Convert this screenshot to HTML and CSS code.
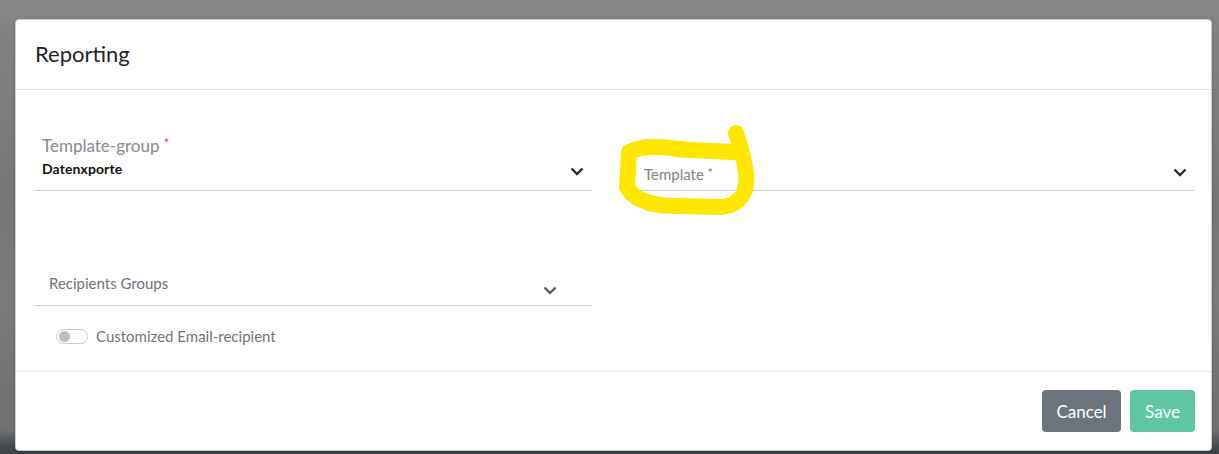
FILE: index.html
```html
<!DOCTYPE html>
<html>
<head>
<meta charset="utf-8">
<link rel="stylesheet" href="styles.css">
</head>
<body>
<div class="backdrop">
  <div class="modal">
    <div class="modal-header">
      <h1 class="modal-title">Reporting</h1>
    </div>
    <div class="modal-body">
      <div class="row row-top">
        <div class="field field-filled">
          <div class="field-text">
            <div class="float-label">Template-group <span class="req">*</span></div>
            <div class="value">Datenxporte</div>
          </div>
          <svg class="chev" width="14" height="9" viewBox="0 0 14 9"><path d="M1.5 1.5 L7 7 L12.5 1.5" fill="none" stroke="#2b2b2b" stroke-width="2.4"/></svg>
        </div>
        <div class="field field-empty">
          <div class="placeholder">Template <span class="req">*</span></div>
          <svg class="chev" width="14" height="9" viewBox="0 0 14 9"><path d="M1.5 1.5 L7 7 L12.5 1.5" fill="none" stroke="#2b2b2b" stroke-width="2.4"/></svg>
          <svg class="scribble" width="150" height="100" viewBox="615 120 150 100">
            <path d="M734 147 L690 145 C668 144 652 137 629 147 L627 182 C633 194 650 201 676 201 L722 202 C741 200 748 186 746 168 C744 154 740 140 736 128" fill="none" stroke="#ffe600" stroke-width="16" stroke-linejoin="round" stroke-linecap="round"/>
          </svg>
        </div>
      </div>
      <div class="row row-second">
        <div class="field field-recip">
          <div class="placeholder dark">Recipients Groups</div>
          <svg class="chev chev-gray" width="14" height="9" viewBox="0 0 14 9"><path d="M1.5 1.5 L7 7 L12.5 1.5" fill="none" stroke="#555" stroke-width="2.2"/></svg>
        </div>
      </div>
      <div class="toggle-row">
        <span class="toggle"><span class="knob"></span></span>
        <span class="toggle-label">Customized Email-recipient</span>
      </div>
    </div>
    <div class="modal-footer">
      <button class="btn btn-cancel">Cancel</button>
      <button class="btn btn-save">Save</button>
    </div>
  </div>
</div>
</body>
</html>
```

FILE: styles.css
```css
* { box-sizing: border-box; }
html, body { margin: 0; padding: 0; }
body {
  width: 1219px;
  height: 454px;
  overflow: hidden;
  font-family: "Lato", "Open Sans", sans-serif;
  background:
    linear-gradient(to bottom, transparent 0, transparent 430px, #454b4f 446px, #3c4246 454px),
    linear-gradient(to bottom, #898989 0, #808080 40px, #7e7e7e 100px, #767676 200px, #7b7b7b 300px, #6f7173 400px);
}
.backdrop { padding: 19px 7px 0 15px; }
.modal {
  height: 432px;
  background: #fff;
  border: 1px solid #cfcfcf;
  border-radius: 4px;
  display: flex;
  flex-direction: column;
  box-shadow: 0 1px 3px rgba(0,0,0,0.25);
}
.modal-header {
  height: 70px;
  border-bottom: 1px solid #dee2e6;
  display: flex;
  align-items: center;
  padding: 0 19px;
}
.modal-title {
  margin: 0;
  font-weight: 400;
  font-size: 22px;
  color: #212529;
  padding-bottom: 2px;
}
.modal-body {
  flex: 1;
  padding: 43px 17px 0 18px;
  display: flex;
  flex-direction: column;
}
.row { display: grid; grid-template-columns: 558px 1fr; column-gap: 39px; }
.field {
  position: relative;
  border-bottom: 1px solid #cfcfcf;
  display: flex;
  align-items: flex-end;
}
.field-filled { height: 58px; padding: 0 0 0 8px; align-items: flex-start; }
.field-text { flex: 1; }
.float-label { font-size: 17px; line-height: 20px; color: #848b92; }
.req { color: #e53935; font-size: 13px; vertical-align: 4px; }
.value { font-size: 14px; font-weight: 700; line-height: 20px; margin-top: 3px; color: #111; letter-spacing: 0.1px; }
.field-filled .chev { margin: 34px 8px 0 0; }
.field-empty { height: 58px; padding: 0 7px 7px 13px; align-items: flex-end; }
.placeholder { flex: 1; font-size: 15px; line-height: 18px; color: #7d848b; }
.placeholder .req { font-size: 12px; vertical-align: 3px; }
.field-empty .chev { margin-bottom: 6px; }
.scribble { position: absolute; left: -16px; top: -8px; pointer-events: none; }
.row-second { margin-top: 59px; }
.field-recip { height: 56px; padding: 0 35px 7px 15px; align-items: flex-end; }
.field-recip .placeholder { align-self: flex-start; margin-top: 24px; color: #6c757d; }
.placeholder.dark { color: #6c757d; }
.chev-gray { margin-bottom: 3px; }
.toggle-row {
  display: flex;
  align-items: center;
  margin-top: 21px;
  padding-left: 22px;
  gap: 8px;
}
.toggle {
  width: 32px;
  height: 15px;
  border: 1px solid #c8c8c8;
  border-radius: 8px;
  display: flex;
  align-items: center;
  padding-left: 2px;
}
.knob { width: 11px; height: 11px; border-radius: 50%; background: #bdbdbd; }
.toggle-label { font-size: 15px; color: #6c757d; }
.modal-footer {
  height: 79px;
  border-top: 1px solid #dee2e6;
  display: flex;
  justify-content: flex-end;
  align-items: flex-start;
  padding: 18px 16px 0 0;
  gap: 9px;
}
.btn {
  height: 42px;
  border: none;
  border-radius: 4px;
  color: #fff;
  font-family: inherit;
  font-size: 17px;
  padding: 0 14px;
}
.btn-cancel { background: #6c757d; width: 79px; }
.btn-save { background: #5ec7a1; width: 65px; }
```
